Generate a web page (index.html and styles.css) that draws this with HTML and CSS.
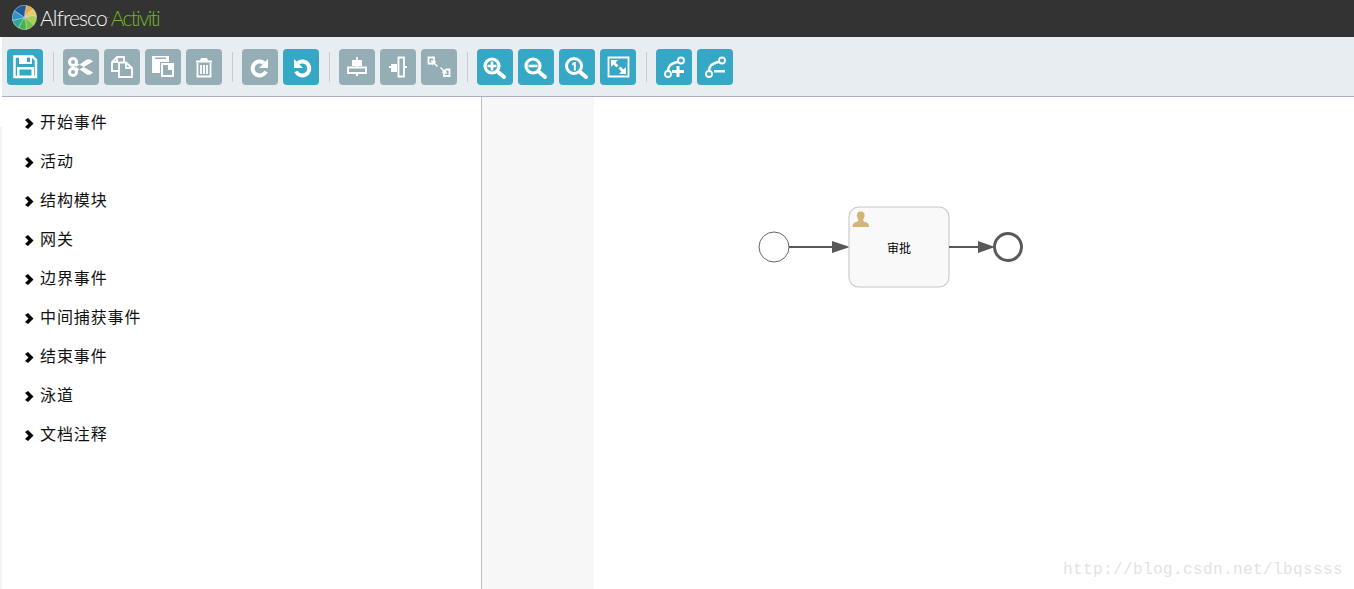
FILE: index.html
```html
<!DOCTYPE html>
<html lang="zh">
<head>
<meta charset="utf-8">
<title>Alfresco Activiti</title>
<link rel="stylesheet" href="styles.css">
</head>
<body>
<div class="app">
  <header class="topbar">
    <svg class="logo" width="25" height="25" viewBox="0 0 26 26">
      <g transform="translate(13 13)">
        <path class="petal" d="M0 0C0-4 1-8 2-12.500A12.500 12.500 0 0 1 9.500-8.500C6-7 2-4 0 0Z" fill="#f0a93f"/>
        <path class="petal" d="M0 0C2-4 6-7 9.500-8.500A12.500 12.500 0 0 1 12.500-1C8-2 4-1 0 0Z" fill="#e8cb62"/>
        <path class="petal" d="M0 0C4-1 8-2 12.500-1A12.500 12.500 0 0 1 9.500 8C7 5 3 2 0 0Z" fill="#a8d150"/>
        <path class="petal" d="M0 0C3 2 7 5 9.500 8A12.500 12.500 0 0 1 2 12.500C2 8 1 4 0 0Z" fill="#72c244"/>
        <path class="petal" d="M0 0C1 4 2 8 2 12.500A12.500 12.500 0 0 1-6 11C-5 7-2 3 0 0Z" fill="#3fb54a"/>
        <path class="petal" d="M0 0C-2 3-5 7-6 11A12.500 12.500 0 0 1-12.500 3C-8 2-4 1 0 0Z" fill="#2aa98e"/>
        <path class="petal" d="M0 0C-4 1-8 2-12.500 3A12.500 12.500 0 0 1-10.500-7C-7-5-3-2 0 0Z" fill="#2f93cc"/>
        <path class="petal" d="M0 0C-3-2-7-5-10.500-7A12.500 12.500 0 0 1 2-12.500C1-8 0-4 0 0Z" fill="#1d5c9c"/>
      </g>
    </svg>
    <span class="brand">Alfresco<sup class="tm">.</sup></span>
    <span class="product">Activiti</span>
  </header>

  <nav class="toolbar">
    <button class="tool on"><svg viewBox="0 0 36 36"><path class="ln" d="M7.500 7.500H25.500L29 11V28H7.500Z"/><path class="fl" d="M12 7H25V15H12Z"/><path class="cut" d="M20 8.500H23V13H20Z"/><path class="fl" d="M10 18H27V29H10Z"/><path class="cut" d="M12.500 20.500H24.500V26.500H12.500Z"/></svg></button>
    <span class="sep"></span>
    <button class="tool"><svg viewBox="0 0 36 36"><circle class="ln thick" cx="10" cy="13" r="3.500"/><circle class="ln thick" cx="10" cy="23" r="3.500"/><path class="fl" d="M13 13.500L30 23.500C28 26 25 26.500 23 25L12.500 17.500ZM13 22.500L30 12.500C28 10 25 9.500 23 11L12.500 18.500Z"/></svg></button>
    <button class="tool"><svg viewBox="0 0 36 36"><path class="ln thin" d="M14 22H8V13L13 8H20V13"/><path class="ln thin" d="M13 8V13H8"/><path class="ln thin" d="M15 13.500H22L28 19V28H15Z"/><path class="ln thin" d="M22 13.500V19H28"/></svg></button>
    <button class="tool"><svg viewBox="0 0 36 36"><path class="fl" d="M7 7H24V13H15V24H7Z"/><path class="cut" d="M10 8.500H21V10H10Z"/><path class="fl" d="M16 14H29V28H16Z"/><path class="cut" d="M18 16H23V21H27V26H18Z"/></svg></button>
    <button class="tool"><svg viewBox="0 0 36 36"><path class="fl" d="M10 11.500H14L15 9H21L22 11.500H26V13.500H10Z"/><path class="ln thin" d="M11.500 14V27.500H24.500V14"/><path class="ln thin" d="M15 16V25M18 16V25M21 16V25"/></svg></button>
    <span class="sep"></span>
    <button class="tool"><svg viewBox="0 0 36 36"><path class="ln heavy" d="M24 22.500A7 7 0 1 1 22 14"/><path class="fl" d="M26 10V19H17Z"/></svg></button>
    <button class="tool on"><svg viewBox="0 0 36 36"><path class="ln heavy" d="M13 22.500A7 7 0 1 0 15 14"/><path class="fl" d="M11 10V19H20Z"/></svg></button>
    <span class="sep"></span>
    <button class="tool"><svg viewBox="0 0 36 36"><path class="fl" d="M17 8H19V11H23V17H19V18H17V17H13V11H17Z"/><path class="fl" d="M17 24H19V27H17Z"/><path class="ln thin" d="M9 18.500H27V24H9Z"/></svg></button>
    <button class="tool"><svg viewBox="0 0 36 36"><path class="fl" d="M9 17H11V15H17V23H11V19H9Z"/><path class="ln thin" d="M18.500 8.500H24V27.500H18.500Z"/><path class="fl" d="M25 17H27V19H25Z"/></svg></button>
    <button class="tool"><svg viewBox="0 0 36 36"><path class="ln thin" d="M13 13V8.500H7.500V14.500H11"/><path class="fl" d="M10 11L15.500 12.500L14 14L17 17L16 18L13 15L11.500 16.500Z"/><path class="ln thin" d="M23 23V27H28.500V20.500H25"/><path class="fl" d="M26 25L20.500 23.500L22 22L19 19L20 18L23 21L24.500 19.500Z"/></svg></button>
    <span class="sep"></span>
    <button class="tool on"><svg viewBox="0 0 36 36"><circle class="ln bold" cx="15" cy="17" r="7"/><path class="fl" d="M13.700 12.500H16.300V15.700H19.500V18.300H16.300V21.500H13.700V18.300H10.500V15.700H13.700Z"/><path class="ln hv" d="M21 23L27 28"/></svg></button>
    <button class="tool on"><svg viewBox="0 0 36 36"><circle class="ln bold" cx="15" cy="17" r="7"/><path class="fl" d="M10.500 15.700H19.500V18.300H10.500Z"/><path class="ln hv" d="M21 23L27 28"/></svg></button>
    <button class="tool on"><svg viewBox="0 0 36 36"><circle class="ln thick" cx="15" cy="17" r="7.500"/><path class="fl" d="M13 14.500L15 13H16.800V21.500H14.800V15.700L13 16.500Z"/><path class="ln hv" d="M21 23L27 28"/></svg></button>
    <button class="tool on"><svg viewBox="0 0 36 36"><path class="ln thin" d="M8.500 8.500H28.500V27.500H8.500Z"/><path class="fl" d="M11 11H18L15.500 13.500L18.500 16.500L16.500 18.500L13.500 15.500L11 18Z"/><path class="fl" d="M26 25H19L21.500 22.500L18.500 19.500L20.500 17.500L23.500 20.500L26 18Z"/></svg></button>
    <span class="sep"></span>
    <button class="tool on"><svg viewBox="0 0 36 36"><circle class="ln thin" cx="12" cy="25" r="3"/><circle class="ln thin" cx="25" cy="11.500" r="3"/><path class="ln" d="M12 22C12 17 14 15 22.500 12.500"/><path class="fl" d="M20.500 17H23.500V21H28V24H23.500V28H20.500V24H16V21H20.500Z"/></svg></button>
    <button class="tool on"><svg viewBox="0 0 36 36"><circle class="ln thin" cx="12" cy="25" r="3"/><circle class="ln thin" cx="25" cy="11.500" r="3"/><path class="ln" d="M12 22C12 17 14 15 22.500 12.500"/><path class="fl" d="M17 21H28V23.500H17Z"/></svg></button>
  </nav>

  <main class="workspace">
    <aside class="palette">
      <ul class="groups">
        <li class="group"><svg class="chev" viewBox="0 0 9 11"><path d="M0 2L3 0L8.500 5.500L3 11L0 9L3.500 5.500Z"/></svg>开始事件</li>
        <li class="group"><svg class="chev" viewBox="0 0 9 11"><path d="M0 2L3 0L8.500 5.500L3 11L0 9L3.500 5.500Z"/></svg>活动</li>
        <li class="group"><svg class="chev" viewBox="0 0 9 11"><path d="M0 2L3 0L8.500 5.500L3 11L0 9L3.500 5.500Z"/></svg>结构模块</li>
        <li class="group"><svg class="chev" viewBox="0 0 9 11"><path d="M0 2L3 0L8.500 5.500L3 11L0 9L3.500 5.500Z"/></svg>网关</li>
        <li class="group"><svg class="chev" viewBox="0 0 9 11"><path d="M0 2L3 0L8.500 5.500L3 11L0 9L3.500 5.500Z"/></svg>边界事件</li>
        <li class="group"><svg class="chev" viewBox="0 0 9 11"><path d="M0 2L3 0L8.500 5.500L3 11L0 9L3.500 5.500Z"/></svg>中间捕获事件</li>
        <li class="group"><svg class="chev" viewBox="0 0 9 11"><path d="M0 2L3 0L8.500 5.500L3 11L0 9L3.500 5.500Z"/></svg>结束事件</li>
        <li class="group"><svg class="chev" viewBox="0 0 9 11"><path d="M0 2L3 0L8.500 5.500L3 11L0 9L3.500 5.500Z"/></svg>泳道</li>
        <li class="group"><svg class="chev" viewBox="0 0 9 11"><path d="M0 2L3 0L8.500 5.500L3 11L0 9L3.500 5.500Z"/></svg>文档注释</li>
      </ul>
    </aside>
    <div class="gutter"></div>
    <section class="canvas">
      <svg class="diagram" width="760" height="492" viewBox="594 97 760 492">
        <circle class="start" cx="774" cy="247" r="15"/>
        <path class="flow" d="M789 247H835"/>
        <path class="head" d="M832 241L850 247L832 253Z"/>
        <rect class="task" x="849" y="207" width="100" height="80" rx="10"/>
        <path class="user" d="M860.500 211.500C857.500 211.500 856.500 214 857 216.500C857.300 218 858 219 858.500 220C858.500 221.500 856 222 854 223C853 223.500 852.500 225 852.500 227H869C869 225 868.500 223.500 867.500 223C865.500 222 863 221.500 863 220C863.500 219 864.200 218 864.500 216.500C865 214 864 211.500 860.500 211.500Z"/>
        <text class="tasklabel" x="899" y="253">审批</text>
        <path class="flow" d="M949 247H982"/>
        <path class="head" d="M978 241L995 247L978 253Z"/>
        <circle class="end" cx="1008" cy="247" r="13.500"/>
      </svg>
      <span class="watermark">http://blog.csdn.net/lbqssss</span>
    </section>
  </main>
</div>
</body>
</html>
```
FILE: styles.css
```css
* { box-sizing: border-box; }
html, body { margin: 0; padding: 0; height: 100%; overflow: hidden; background: #fff; }
body { font-family: "Noto Sans CJK SC", "Liberation Sans", sans-serif; }

.app { display: flex; flex-direction: column; width: 1354px; height: 589px; }

.topbar {
  display: flex; align-items: center; flex: none;
  height: 37px; padding: 0 0 2px 12px; background: #333;
  font-family: Lato, "Liberation Sans", sans-serif; font-weight: 300; font-size: 21px; letter-spacing: -.85px;
}
.logo { flex: none; margin-right: 3px; }
.petal { stroke: #dfe9e6; stroke-width: .5; }
.brand { color: #f6f6f6; }
.tm { font-size: 8px; line-height: 0; }
.product { margin-left: 3px; color: #74b52f; letter-spacing: -1.8px; }

.toolbar {
  display: flex; align-items: center; flex: none;
  height: 60px; margin-left: 2px; padding-left: 5px;
  background: #e8edf2; border-bottom: 1px solid #a9b0bc; gap: 5px;
}
.tool {
  width: 36px; height: 36px; padding: 0; border: 0; border-radius: 4px;
  background: #95aeb5; display: block;
}
.tool.on { background: #36a7c5; }
.tool svg { display: block; width: 36px; height: 36px; }
.sep { width: 1px; height: 30px; margin: 0 4px 0 5px; background: #c6ccd1; }

.ln { fill: none; stroke: #fff; stroke-width: 2.5; }
.ln.thin { stroke-width: 1.800; }
.ln.thick { stroke-width: 3; }
.ln.bold { stroke-width: 3.200; }
.ln.heavy { stroke-width: 4; }
.ln.hv { stroke-width: 4; stroke-linecap: round; }
.fl { fill: #fff; }
.cut { fill: #95aeb5; }
.on .cut { fill: #36a7c5; }

.workspace { display: flex; flex: 1; min-height: 0; }

.palette {
  position: relative; flex: none; width: 482px;
  border-right: 1px solid #b9bec6; padding-top: 4px;
}
.palette::before {
  content: ""; position: absolute; left: 0; top: 30px; bottom: 0; width: 2px; background: #f3f3f3;
}
.groups { list-style: none; margin: 0; padding: 0 0 0 25px; }
.group {
  display: flex; align-items: center; height: 39px;
  font-size: 16px; letter-spacing: .9px; color: #111;
}
.chev { flex: none; width: 9px; height: 11px; margin: 6px 6px 0 0; fill: #000; }

.gutter { flex: none; width: 112px; background: #f7f7f8; }

.canvas { position: relative; flex: 1; background: #fff; }
.diagram { display: block; }
.start { fill: #fff; stroke: #666; stroke-width: 1; }
.flow { fill: none; stroke: #585858; stroke-width: 2; }
.head { fill: #585858; }
.task { fill: #f9f9f9; stroke: #c8c8c8; stroke-width: 1.100; }
.user { fill: #d3b575; }
.tasklabel { font-size: 12px; text-anchor: middle; fill: #000; }
.end { fill: #fff; stroke: #585858; stroke-width: 3; }

.watermark {
  position: absolute; right: 11px; bottom: 10px;
  font-family: "Liberation Mono", monospace; font-size: 16px; letter-spacing: .4px;
  color: #e3e3e3; white-space: nowrap;
}
```
